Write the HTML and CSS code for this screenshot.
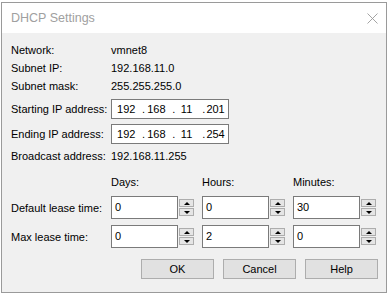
FILE: index.html
```html
<!DOCTYPE html>
<html lang="en">
<head>
    <meta charset="UTF-8">
    <title>DHCP Settings</title>
    <link rel="stylesheet" href="styles.css">
</head>
<body>

    <div class="dialog">
        <!-- Title bar -->
        <div class="titlebar">
            <span class="title">DHCP Settings</span>
            <svg class="close" width="11" height="11" viewBox="0 0 11 11">
                <path d="M0.5 0.5 L10.5 10.5 M10.5 0.5 L0.5 10.5" stroke="#9a9a9a" stroke-width="0.9" fill="none"/>
            </svg>
        </div>

        <div class="content">
            <div class="row row-info first">
                <span class="label">Network:</span>
                <span class="value">vmnet8</span>
            </div>
            <div class="row row-info">
                <span class="label">Subnet IP:</span>
                <span class="value">192.168.11.0</span>
            </div>
            <div class="row row-info">
                <span class="label">Subnet mask:</span>
                <span class="value">255.255.255.0</span>
            </div>

            <div class="row row-ip start-ip">
                <span class="label">Starting IP address:</span>
                <div class="ipbox">
                    <span class="oct">192</span><span class="dot">.</span><span class="oct">168</span><span class="dot">.</span><span class="oct">11</span><span class="dot">.</span><span class="oct last">201</span>
                </div>
            </div>
            <div class="row row-ip end-ip">
                <span class="label">Ending IP address:</span>
                <div class="ipbox">
                    <span class="oct">192</span><span class="dot">.</span><span class="oct">168</span><span class="dot">.</span><span class="oct">11</span><span class="dot">.</span><span class="oct last">254</span>
                </div>
            </div>
            <div class="row row-info broadcast">
                <span class="label">Broadcast address:</span>
                <span class="value">192.168.11.255</span>
            </div>

            <!-- Lease times -->
            <div class="lease-grid">
                <span></span>
                <span class="col-head">Days:</span>
                <span class="col-head">Hours:</span>
                <span class="col-head">Minutes:</span>

                <span class="label">Default lease time:</span>
                <div class="spin"><div class="field">0</div><div class="arrows"><span class="arrow up"></span><span class="arrow down"></span></div></div>
                <div class="spin"><div class="field">0</div><div class="arrows"><span class="arrow up"></span><span class="arrow down"></span></div></div>
                <div class="spin"><div class="field">30</div><div class="arrows"><span class="arrow up"></span><span class="arrow down"></span></div></div>

                <span class="label">Max lease time:</span>
                <div class="spin"><div class="field">0</div><div class="arrows"><span class="arrow up"></span><span class="arrow down"></span></div></div>
                <div class="spin"><div class="field">2</div><div class="arrows"><span class="arrow up"></span><span class="arrow down"></span></div></div>
                <div class="spin"><div class="field">0</div><div class="arrows"><span class="arrow up"></span><span class="arrow down"></span></div></div>
            </div>

            <div class="buttons">
                <button class="btn">OK</button>
                <button class="btn">Cancel</button>
                <button class="btn">Help</button>
            </div>
        </div>
    </div>

</body>
</html>
```

FILE: styles.css
```css
/* Global */
* {
    margin: 0;
    padding: 0;
    box-sizing: border-box;
    font-family: 'Liberation Sans', Arial, sans-serif;
}

body {
    background: #ffffff;
    width: 390px;
    height: 295px;
    overflow: hidden;
}

/* DIALOG WINDOW */
.dialog {
    margin: 2px 0 0 1px;
    width: 386px;
    height: 291px;
    border: 1px solid #9a9a9a;
    background: #f0f0f0;
    display: flex;
    flex-direction: column;
}

.titlebar {
    height: 30px;
    background: #ffffff;
    display: flex;
    align-items: center;
    justify-content: space-between;
    padding: 0 8px 0 9px;
}

.title {
    font-size: 12.5px;
    color: #a0a0a0;
}

.close {
    display: block;
    margin-top: 1px;
}

/* CONTENT */
.content {
    padding: 0 8px 0 9px;
    font-size: 11px;
    color: #000000;
}

.row {
    display: grid;
    grid-template-columns: 100px auto;
    align-items: center;
}

.row-info {
    height: 18px;
}

.row-info.first {
    height: 19px;
    margin-top: 7px;
}

.start-ip {
    margin-top: 4px;
}

.end-ip {
    margin-top: 5px;
}

.broadcast {
    margin-top: 3px;
}

/* IP ADDRESS BOX */
.ipbox {
    width: 118px;
    height: 20px;
    border: 1px solid #7a7a7a;
    background: #ffffff;
    display: flex;
    align-items: center;
    padding-left: 3px;
}

.oct {
    width: 24px;
    text-align: center;
}

.oct.last {
    text-align: left;
    padding-left: 1px;
}

.dot {
    width: 8px;
    text-align: right;
}

/* LEASE GRID */
.lease-grid {
    display: grid;
    grid-template-columns: 100px 91px 91px 91px;
    grid-template-rows: 16px 23px 23px;
    row-gap: 6px;
    align-items: center;
    margin-top: 9px;
}

.spin {
    display: flex;
    align-items: center;
    height: 23px;
}

.field {
    width: 67px;
    height: 23px;
    border: 1px solid #7a7a7a;
    background: #ffffff;
    padding: 4px 0 0 3px;
}

.arrows {
    margin-left: 1px;
    display: flex;
    flex-direction: column;
    gap: 1px;
}

.arrow {
    width: 15px;
    height: 8px;
    border: 1px solid #adadad;
    background: #e5e5e5;
    display: flex;
    align-items: center;
    justify-content: center;
}

.arrow::after {
    content: "";
    border-left: 3px solid transparent;
    border-right: 3px solid transparent;
}

.arrow.up::after {
    border-bottom: 3px solid #000000;
}

.arrow.down::after {
    border-top: 3px solid #000000;
}

/* BUTTONS */
.buttons {
    display: flex;
    justify-content: flex-end;
    gap: 9px;
    margin-top: 11px;
}

.btn {
    width: 73px;
    height: 20px;
    background: #e1e1e1;
    border: 1px solid #adadad;
    font-size: 11px;
    color: #000000;
}
```
